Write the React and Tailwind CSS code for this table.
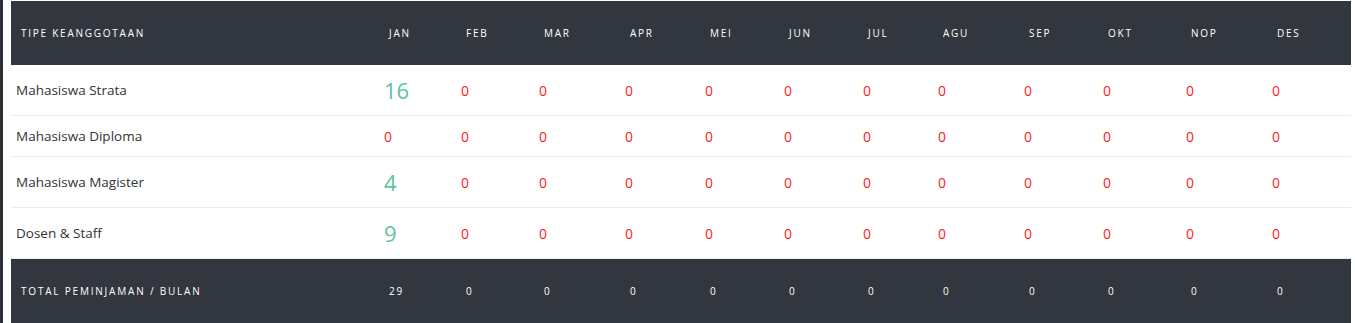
import React from "react";

const months = ["JAN","FEB","MAR","APR","MEI","JUN","JUL","AGU","SEP","OKT","NOP","DES"];
const rows = [
  { name: "Mahasiswa Strata", jan: 16, h: "h-[51px]" },
  { name: "Mahasiswa Diploma", jan: 0, h: "h-[41px]" },
  { name: "Mahasiswa Magister", jan: 4, h: "h-[51px]" },
  { name: "Dosen & Staff", jan: 9, h: "h-[51px]" },
];
const totals = [29,0,0,0,0,0,0,0,0,0,0,0];
const cols = "grid grid-cols-[368px_77px_78px_86px_80px_79px_79px_75px_86px_79px_83px_86px_84px]";

export default function App() {
  return (
    <div className="flex w-[1355px] h-[323px] bg-white" style={{ fontFamily: '"Open Sans", sans-serif' }}>
      <div className="w-[3px] bg-[#2b2e34]" />
      <div className="w-[8px]" />
      <div className="w-[1340px] pt-px">
        <div className={`${cols} h-[64px] items-center bg-[#32363f] text-white text-[10px] tracking-[1.75px]`}>
          <div className="pl-[10px]">TIPE KEANGGOTAAN</div>
          {months.map((m) => (
            <div key={m} className="pl-[10px]">{m}</div>
          ))}
        </div>
        {rows.map((r) => (
          <div key={r.name} className={`${cols} ${r.h} items-center border-b border-[#ececec]`}>
            <div className="pl-[5px] text-[13.5px] text-[#333]">{r.name}</div>
            {months.map((m, i) => {
              const v = i === 0 ? r.jan : 0;
              return v > 0 ? (
                <div key={m} className="pl-[5px] text-[22px] text-[#5cc2a4] leading-none">{v}</div>
              ) : (
                <div key={m} className="pl-[5px] text-[14px] text-[#ff1a1a]">0</div>
              );
            })}
          </div>
        ))}
        <div className={`${cols} h-[64px] items-center bg-[#32363f] text-white text-[10px] font-medium tracking-[1.8px]`}>
          <div className="pl-[10px] font-normal">TOTAL PEMINJAMAN / BULAN</div>
          {totals.map((t, i) => (
            <div key={i} className="pl-[10px]">{t}</div>
          ))}
        </div>
      </div>
    </div>
  );
}
